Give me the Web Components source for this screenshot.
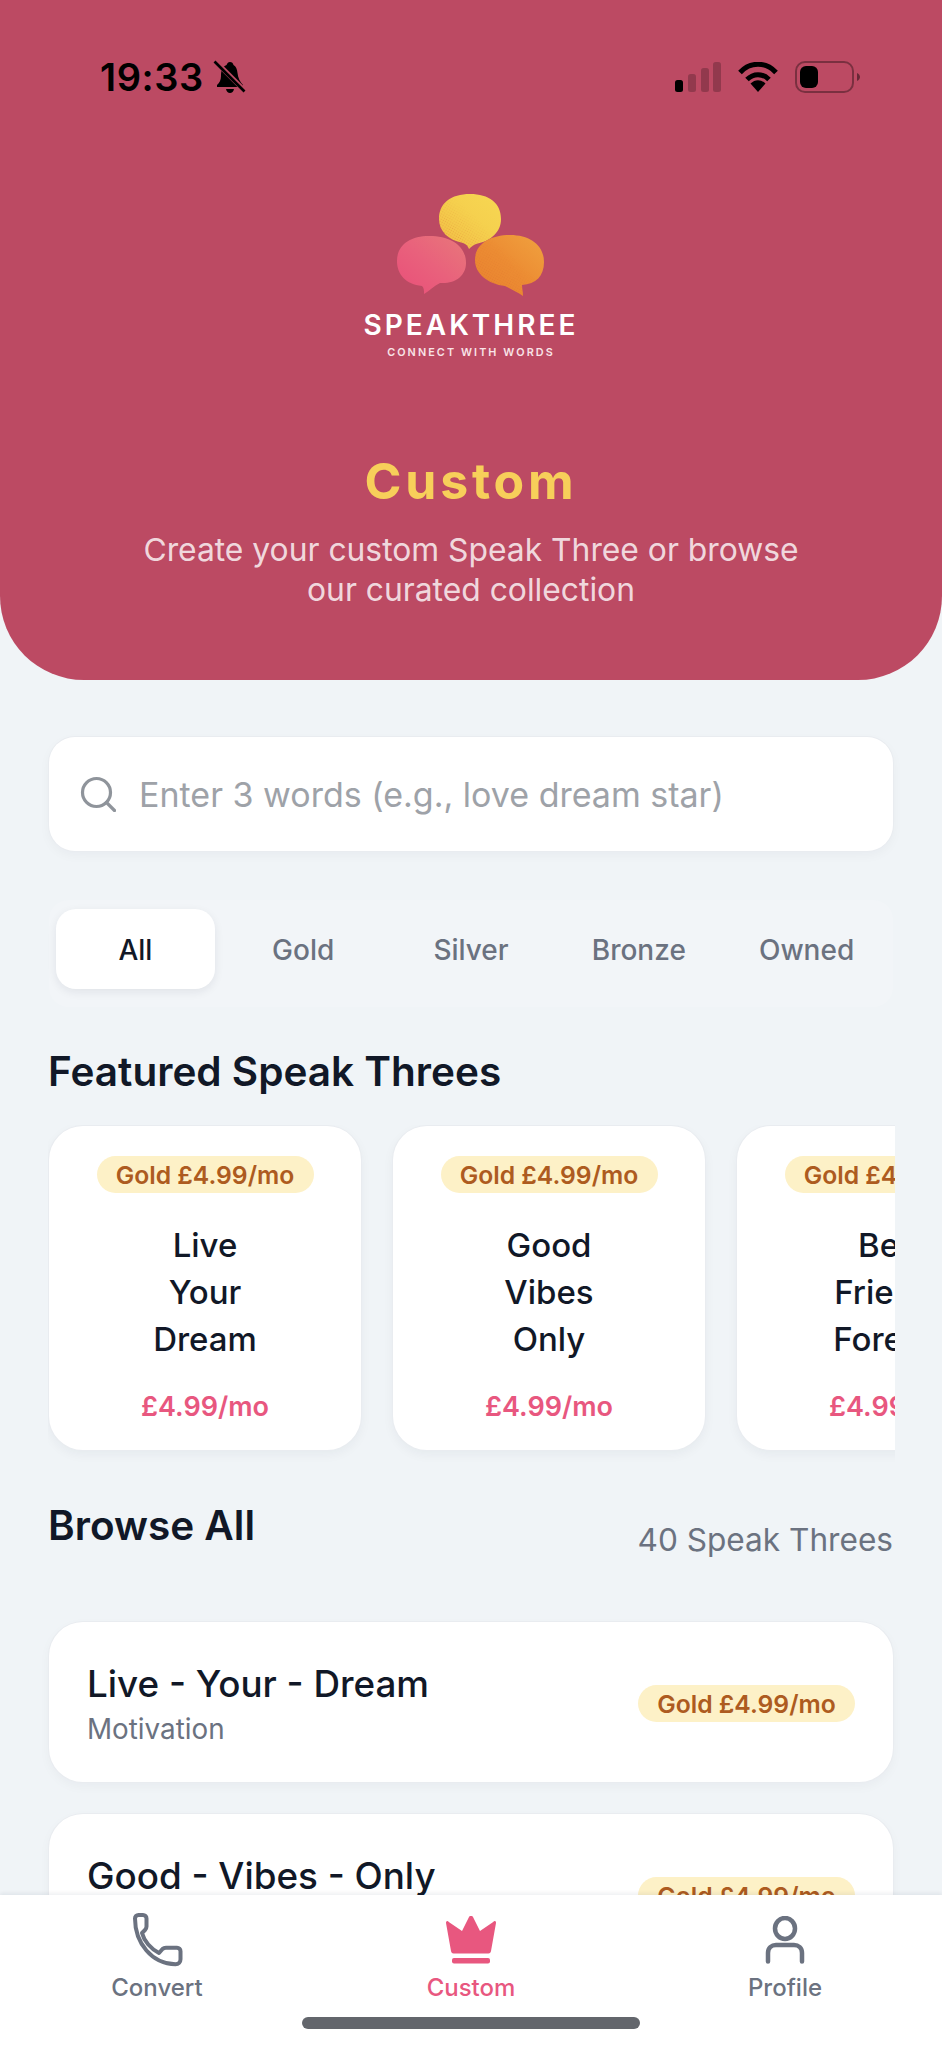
<!DOCTYPE html>
<html lang="en">
<head>
<meta charset="utf-8">
<title>Custom</title>
<style>
    html, body { margin: 0; padding: 0; background: #F0F4F7; }
    body { font-family: Inter, "Liberation Sans", sans-serif; }
</style>
</head>
<body>
<app-shell>
    <app-header slot="header"></app-header>
    <search-box placeholder="Enter 3 words (e.g., love dream star)"></search-box>
    <filter-tabs></filter-tabs>
    <section-title>Featured Speak Threes</section-title>
    <featured-row>
        <featured-card words="Live,Your,Dream"></featured-card>
        <featured-card words="Good,Vibes,Only"></featured-card>
        <featured-card words="Best,Friends,Forever"></featured-card>
    </featured-row>
    <browse-head count="40 Speak Threes">Browse All</browse-head>
    <browse-item category="Motivation">Live - Your - Dream</browse-item>
    <browse-item category="Positivity">Good - Vibes - Only</browse-item>
    <tab-bar slot="footer"></tab-bar>
</app-shell>

<script>
/**
 * Small helper, every element below has a fixed markup so the shadow root is
 * simply set from a string.
 */
function shadow(el, html) {
    el.attachShadow({mode: "open"}).innerHTML = html;
}

class AppShell extends HTMLElement {
    constructor() {
        super();
        shadow(this, `
        <style>
            :host { display: flex; flex-direction: column; width: 942px; height: 2048px; overflow: hidden; background: #F0F4F7; }
            main { flex: 1; min-height: 0; overflow: hidden; padding: 57px 49px 0; display: flex; flex-direction: column; }
        </style>
        <slot name="header"></slot>
        <main><slot></slot></main>
        <slot name="footer"></slot>`);
    }
}

class StatusBar extends HTMLElement {
    constructor() {
        super();
        shadow(this, `
        <style>
            :host { display: flex; align-items: center; height: 44px; padding: 0 81px 0 100px; color: #000; }
            .time { font-size: 38px; font-weight: 600; letter-spacing: 0.6px; line-height: 44px; }
            .bell { margin-left: 9px; }
            .right { margin-left: auto; display: flex; align-items: center; gap: 17px; }
        </style>
        <span class="time">19:33</span>
        <svg class="bell" width="34" height="34" viewBox="0 0 34 34">
            <path d="M17 2c-2 0-3 1.500-3.400 3C9 7 8 11 8 16c0 4-1.500 7-4 9v2h26v-2c-3-3-5-7-5.500-12C24 9 23 6.500 20.500 5 20 3 19 2 17 2z" fill="#000"/>
            <path d="M13 29c.5 2.500 2 4 4 4s3.500-1.500 4-4z" fill="#000"/>
            <path d="M3 2l29 29" stroke="#BC4A63" stroke-width="5"/>
            <path d="M1.500 1.500l30 30" stroke="#000" stroke-width="2.600"/>
        </svg>
        <div class="right">
            <svg width="46" height="30" viewBox="0 0 46 30">
                <rect x="0" y="18" width="8" height="12" rx="2.500" fill="#000"/>
                <rect x="13" y="12" width="8" height="18" rx="2.500" fill="#000" opacity=".22"/>
                <rect x="26" y="6" width="8" height="24" rx="2.500" fill="#000" opacity=".22"/>
                <rect x="38" y="0" width="8" height="30" rx="2.500" fill="#000" opacity=".22"/>
            </svg>
            <svg width="40" height="30" viewBox="0 0 40 30">
                <path d="M2 10.500C12-.5 28-.5 38 10.500" fill="none" stroke="#000" stroke-width="5"/>
                <path d="M9 17.500c6.500-6.500 15.500-6.500 22 0" fill="none" stroke="#000" stroke-width="5"/>
                <path d="M12.500 21.500c4.500-4.500 10.500-4.500 15 0L20 30z" fill="#000"/>
            </svg>
            <svg width="66" height="32" viewBox="0 0 66 32">
                <rect x="1" y="1" width="57" height="30" rx="9" fill="none" stroke="#000" stroke-opacity=".35" stroke-width="2"/>
                <rect x="5" y="5" width="18" height="22" rx="6" fill="#000"/>
                <path d="M62 12c2 1 3 2.500 3 4s-1 3-3 4z" fill="#000" fill-opacity=".45"/>
            </svg>
        </div>`);
    }
}

class SpeakLogo extends HTMLElement {
    constructor() {
        super();
        shadow(this, `
        <style>
            :host { display: flex; flex-direction: column; align-items: center; }
            svg { display: block; width: 156px; height: 112px; margin-right: 1px; }
            .name { font-weight: 600; font-size: 28px; letter-spacing: 3px; line-height: 28px; color: #fff; margin-top: 9px; white-space: nowrap; }
            .tag { font-weight: 600; font-size: 10.800px; letter-spacing: 2.100px; line-height: 12px; color: #F9E4E8; margin-top: 8px; white-space: nowrap; }
        </style>
        <svg viewBox="0 0 156 112">
            <defs>
                <linearGradient id="g1" x1="0" y1="1" x2="1" y2="0">
                    <stop offset="0" stop-color="#F2BE45"/><stop offset=".55" stop-color="#F5D04E"/><stop offset="1" stop-color="#F7D752"/>
                </linearGradient>
                <linearGradient id="g2" x1="0" y1="1" x2="1" y2="0">
                    <stop offset="0" stop-color="#E94F79"/><stop offset=".5" stop-color="#E9617C"/><stop offset="1" stop-color="#E8787A"/>
                </linearGradient>
                <linearGradient id="g3" x1="0" y1="1" x2="1" y2="0">
                    <stop offset="0" stop-color="#E9832F"/><stop offset=".5" stop-color="#EC8C33"/><stop offset="1" stop-color="#F0A23F"/>
                </linearGradient>
                <pattern id="dots" width="2.400" height="2.400" patternUnits="userSpaceOnUse" patternTransform="rotate(30)">
                    <circle cx="1.200" cy="1.200" r=".6" fill="#D9622F" fill-opacity=".55"/>
                </pattern>
                <linearGradient id="fade" x1="0" y1="1" x2="1" y2="0">
                    <stop offset="0" stop-color="#fff"/><stop offset=".6" stop-color="#fff" stop-opacity="0"/>
                </linearGradient>
                <mask id="m" maskContentUnits="objectBoundingBox"><rect width="1" height="1" fill="url(#fade)"/></mask>
            </defs>
            <path d="M76 59C75 56 73 54 70 53C55 50 46 41 46 29C46 13 58 4 77 4C96 4 108 13 108 29C108 42 98 51 83 54C80 55 78 57 76 59Z" fill="url(#g1)"/>
            <path d="M31 104C31 100 31 98 29 96C13 94 4 85 4 71C4 55 17 46 36 46C58 46 73 56 73 73C73 86 62 94 47 93C41 96 36 101 31 104Z" fill="url(#g2)"/>
            <path d="M130 106C124 102 118 99 112 96C95 94 82 84 82 70C82 54 97 45 117 45C138 45 151 56 151 72C151 86 143 94 129 95C129 98 130 102 130 106Z" fill="url(#g3)"/>
            <path mask="url(#m)" d="M76 59C75 56 73 54 70 53C55 50 46 41 46 29C46 13 58 4 77 4C96 4 108 13 108 29C108 42 98 51 83 54C80 55 78 57 76 59Z" fill="url(#dots)"/>
            <path mask="url(#m)" d="M130 106C124 102 118 99 112 96C95 94 82 84 82 70C82 54 97 45 117 45C138 45 151 56 151 72C151 86 143 94 129 95C129 98 130 102 130 106Z" fill="url(#dots)"/>
        </svg>
        <div class="name">SPEAKTHREE</div>
        <div class="tag">CONNECT WITH WORDS</div>`);
    }
}

class AppHeader extends HTMLElement {
    constructor() {
        super();
        shadow(this, `
        <style>
            :host { display: block; box-sizing: border-box; height: 680px; padding-top: 55px; background: #BC4A63; border-radius: 0 0 84px 84px; }
            speak-logo { margin-top: 91px; }
            h1 { margin: 93px 0 0; text-align: center; font-size: 50px; line-height: 58px; font-weight: 700; letter-spacing: 3.800px; color: #F7CF5A; }
            p { margin: 20px 0 0; text-align: center; font-size: 31.800px; line-height: 40px; font-weight: 400; color: rgba(255,255,255,.8); }
        </style>
        <status-bar></status-bar>
        <speak-logo></speak-logo>
        <h1>Custom</h1>
        <p>Create your custom Speak Three or browse<br>our curated collection</p>`);
    }
}

class SearchBox extends HTMLElement {
    constructor() {
        super();
        shadow(this, `
        <style>
            :host { display: flex; align-items: center; flex: none; box-sizing: border-box; height: 114px; padding-left: 31px; background: #fff; border-radius: 26px; box-shadow: 0 0 0 1px #E9ECF0, 0 4px 12px rgba(20,30,50,.04); }
            svg { flex: none; }
            span { margin-left: 23px; font-size: 34px; color: #9EA2A8; white-space: nowrap; }
        </style>
        <svg width="36" height="36" viewBox="0 0 36 36" fill="none" stroke="#8F949B" stroke-width="3.200" stroke-linecap="round">
            <circle cx="16.500" cy="16.500" r="14"/><path d="M26.500 26.500l8 8"/>
        </svg>
        <span>${this.getAttribute("placeholder")}</span>`);
    }
}

class FilterTabs extends HTMLElement {
    constructor() {
        super();
        const tabs = ["All", "Gold", "Silver", "Bronze", "Owned"];
        shadow(this, `
        <style>
            :host { display: flex; flex: none; gap: 9px; box-sizing: border-box; height: 107px; margin-top: 49px; padding: 9px 7px 18px; background: #F2F5F8; border-radius: 20px; }
            div { flex: 1; display: flex; align-items: center; justify-content: center; padding-top: 2px; font-size: 28px; font-weight: 500; color: #6B7280; border-radius: 20px; }
            .on { background: #fff; color: #111827; font-weight: 550; box-shadow: 0 3px 10px rgba(20,30,50,.08); }
        </style>
        ${tabs.map((t, i) => `<div class="${i === 0 ? "on" : ""}">${t}</div>`).join("")}`);
    }
}

class SectionTitle extends HTMLElement {
    constructor() {
        super();
        shadow(this, `
        <style>
            :host { display: block; flex: none; margin: 40px 0 0 -1px; font-size: 40.500px; line-height: 50px; font-weight: 600; color: #111827; }
        </style>
        <slot></slot>`);
    }
}

class TierBadge extends HTMLElement {
    constructor() {
        super();
        shadow(this, `
        <style>
            :host { display: inline-flex; align-items: center; justify-content: center; box-sizing: border-box; width: 217px; height: 37px; background: #FDF1C7; border-radius: 19px; font-size: 24.700px; font-weight: 600; color: #AD5B20; white-space: nowrap; }
        </style>
        Gold £4.99/mo`);
    }
}

class FeaturedRow extends HTMLElement {
    constructor() {
        super();
        shadow(this, `
        <style>
            :host { display: flex; flex: none; gap: 32px; width: 846px; overflow: hidden; margin-top: 28px; padding: 1px 0 16px 1px; margin-left: -1px; margin-bottom: -16px; }
        </style>
        <slot></slot>`);
    }
}

class FeaturedCard extends HTMLElement {
    constructor() {
        super();
        const words = this.getAttribute("words").split(",");
        shadow(this, `
        <style>
            :host { display: flex; flex-direction: column; align-items: center; flex: none; box-sizing: border-box; width: 312px; height: 324px; padding-top: 30px; background: #fff; border-radius: 34px; box-shadow: 0 0 0 1px #E9ECF0, 0 4px 12px rgba(20,30,50,.05); }
            .words { margin-top: 29px; text-align: center; font-size: 33px; line-height: 47px; font-weight: 500; color: #111827; }
            .price { margin-top: 27px; font-size: 27px; line-height: 34px; font-weight: 600; color: #E8577F; }
        </style>
        <tier-badge></tier-badge>
        <div class="words">${words.join("<br>")}</div>
        <div class="price">£4.99/mo</div>`);
    }
}

class BrowseHead extends HTMLElement {
    constructor() {
        super();
        shadow(this, `
        <style>
            :host { display: flex; justify-content: space-between; flex: none; margin-top: 51px; height: 121px; }
            .title { margin-left: -1px; font-size: 40.500px; line-height: 50px; font-weight: 600; color: #111827; }
            .count { font-size: 31.600px; line-height: 40px; margin-top: 19px; color: #6B7280; white-space: nowrap; }
        </style>
        <div class="title"><slot></slot></div>
        <div class="count">${this.getAttribute("count")}</div>`);
    }
}

class BrowseItem extends HTMLElement {
    constructor() {
        super();
        shadow(this, `
        <style>
            :host { display: flex; align-items: center; justify-content: space-between; flex: none; box-sizing: border-box; height: 160px; margin: 0 0 32px; padding: 3px 38px 0 38px; background: #fff; border-radius: 34px; box-shadow: 0 0 0 1px #E9ECF0, 0 4px 12px rgba(20,30,50,.04); }
            .title { font-size: 36.800px; line-height: 46px; font-weight: 500; color: #111827; }
            .cat { font-size: 27.800px; line-height: 36px; margin-top: 4px; color: #6B7280; }
        </style>
        <div>
            <div class="title"><slot></slot></div>
            <div class="cat">${this.getAttribute("category")}</div>
        </div>
        <tier-badge></tier-badge>`);
    }
}

class NavItem extends HTMLElement {
    constructor() {
        super();
        shadow(this, `
        <style>
            :host { display: flex; flex-direction: column; align-items: center; flex: none; width: 314px; color: #6B7280; }
            :host([active]) { color: #E8577F; }
            .icon { height: 54px; display: flex; align-items: center; }
            .label { margin-top: 5px; font-size: 24px; line-height: 32px; font-weight: 500; }
        </style>
        <div class="icon"><slot name="icon"></slot></div>
        <div class="label"><slot></slot></div>`);
    }
}

class TabBar extends HTMLElement {
    constructor() {
        super();
        shadow(this, `
        <style>
            :host { display: block; box-sizing: border-box; flex: none; position: relative; height: 153px; padding-top: 18px; background: #fff; box-shadow: 0 -2px 4px rgba(20,30,50,.07); }
            .items { display: flex; }
            .home { width: 338px; height: 12px; margin: 13px auto 0; background: #63666C; border-radius: 6px; }
            svg { display: block; }
        </style>
        <div class="items">
            <nav-item>
                <svg slot="icon" width="54" height="54" viewBox="0 0 54 54" fill="none" stroke="#6B7280" stroke-width="4" stroke-linejoin="round">
                    <path d="M5 5.500c0-2 1.500-3.500 3.500-3.500h4.500c2 0 3.500 1.500 3.500 3.500v8c0 1.500-.5 2.500-1.500 3.500l-3 3c2 8 9 16 17 20l3.500-4c1-1 2-1.300 3.500-1.300h11c2 0 3.500 1.500 3.500 3.500v8c0 3-2 5-5 5C22 51 5 30 5 5.500z"/>
                </svg>
                Convert
            </nav-item>
            <nav-item active>
                <svg slot="icon" width="54" height="48" viewBox="0 0 54 48" fill="#E8577F">
                    <path d="M2 7c0-2 1.600-2.600 2.800-1L18 15 25 1c1-1.800 3-1.800 4 0l7 14L49.200 6c1.200-1.600 2.900-1 2.800 1L47 35c-.3 1.500-1 2.500-2.500 2.500h-35C8 37.500 7.300 36.500 7 35L2 7z"/>
                    <rect x="8" y="42" width="38" height="5.500" rx="2"/>
                </svg>
                Custom
            </nav-item>
            <nav-item>
                <svg slot="icon" width="40" height="48" viewBox="0 0 40 48" fill="none" stroke="#6B7280" stroke-width="4.500" stroke-linecap="round">
                    <ellipse cx="20" cy="12.500" rx="10" ry="10.500"/>
                    <path d="M3 45.500V37c0-5 3.500-8 8-8h18c4.500 0 8 3 8 8v8.500"/>
                </svg>
                Profile
            </nav-item>
        </div>
        <div class="home"></div>`);
    }
}

customElements.define("status-bar", StatusBar);
customElements.define("speak-logo", SpeakLogo);
customElements.define("app-header", AppHeader);
customElements.define("search-box", SearchBox);
customElements.define("filter-tabs", FilterTabs);
customElements.define("section-title", SectionTitle);
customElements.define("tier-badge", TierBadge);
customElements.define("featured-row", FeaturedRow);
customElements.define("featured-card", FeaturedCard);
customElements.define("browse-head", BrowseHead);
customElements.define("browse-item", BrowseItem);
customElements.define("nav-item", NavItem);
customElements.define("tab-bar", TabBar);
customElements.define("app-shell", AppShell);
</script>
</body>
</html>
